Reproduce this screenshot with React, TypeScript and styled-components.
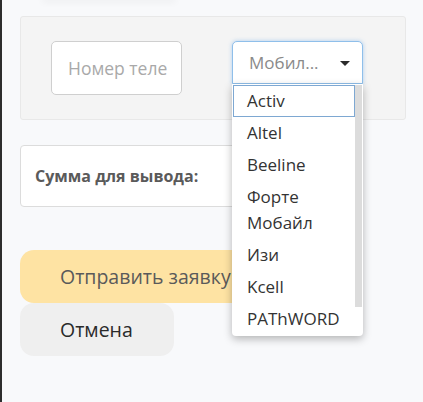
import React from "react";
import styled, { createGlobalStyle } from "styled-components";

const Global = createGlobalStyle`
  html, body { margin: 0; padding: 0; background: #f8f9fb; }
  body { font-family: "Open Sans", "Noto Sans", sans-serif; }
  * { box-sizing: border-box; }
`;

const Page = styled.div`
  min-height: 402px;
  border-left: 2px solid #2d2d2d;
  background: #f8f9fb;
  padding: 0 0 0 18px;
  overflow: hidden;
`;

const TopShade = styled.div`
  height: 0;
  width: 130px;
  margin-left: 24px;
  box-shadow: 0 0 7px 2px rgba(0, 0, 0, 0.06);
`;

const Panel = styled.div`
  margin-top: 16px;
  width: 386px;
  height: 104px;
  background: #f4f4f4;
  border: 1px solid #e8e8e8;
  border-radius: 3px;
  padding: 24px 0 0 30px;
  display: flex;
  align-items: flex-start;
  gap: 50px;
`;

const PhoneInput = styled.input`
  width: 131px;
  height: 54px;
  border: 1px solid #cfcfcf;
  border-radius: 5px;
  background: #fff;
  padding: 0 14px 0 16px;
  font-family: "Open Sans", sans-serif;
  font-size: 17.5px;
  color: #333;
  outline: none;
  &::placeholder { color: #a9a9a9; }
`;

const SelectWrap = styled.div`
  position: relative;
  width: 131px;
`;

const SelectBox = styled.div`
  height: 43px;
  border: 1px solid #8fbfea;
  border-radius: 5px 5px 0 0;
  background: #fff;
  box-shadow: 0 0 4px rgba(90, 160, 230, 0.45);
  display: flex;
  align-items: center;
  justify-content: space-between;
  padding: 0 12px 0 16px;
  font-size: 17px;
  color: #8a8a8a;
`;

const Caret = styled.span`
  width: 0;
  height: 0;
  border-left: 5px solid transparent;
  border-right: 5px solid transparent;
  border-top: 5px solid #2b2b2b;
  margin-top: 2px;
`;

const List = styled.div`
  position: absolute;
  top: 43px;
  left: 0;
  width: 131px;
  background: #fff;
  padding: 1px 8px 1px 1px;
  border-radius: 0 0 4px 4px;
  box-shadow: 0 3px 8px rgba(0, 0, 0, 0.28);
  z-index: 5;
`;

const Scroll = styled.div`
  position: absolute;
  right: 1px;
  top: 1px;
  width: 7px;
  height: 222px;
  background: #dcdcdc;
`;

const Item = styled.div<{ $active?: boolean }>`
  border: 1px solid ${(p) => (p.$active ? "#7ea8d2" : "transparent")};
  padding: 2px 13px;
  line-height: 26px;
  font-size: 17px;
  color: #333;
`;

const SumBox = styled.div`
  margin-top: 25px;
  width: 300px;
  height: 62px;
  background: #fff;
  border: 1px solid #dcdcdc;
  border-radius: 4px;
  display: flex;
  align-items: center;
  padding-left: 14px;
  font-weight: 700;
  font-size: 16px;
  color: #5a5a5a;
`;

const Button = styled.div<{ $variant: "primary" | "secondary"; $width: number }>`
  width: ${(p) => p.$width}px;
  height: 53px;
  border-radius: 14px;
  display: flex;
  align-items: center;
  padding-left: 40px;
  font-size: 19.5px;
  background: ${(p) => (p.$variant === "primary" ? "#fee3a3" : "#efefef")};
  color: ${(p) => (p.$variant === "primary" ? "#5a5a5a" : "#2a2a2a")};
`;

const Actions = styled.div`
  margin-top: 43px;
  display: flex;
  flex-direction: column;
`;

const items = ["Activ", "Altel", "Beeline", "Форте Мобайл", "Изи", "Kcell", "PAThWORD"];

export default function App() {
  return (
    <>
      <Global />
      <Page>
        <TopShade />
        <Panel>
          <PhoneInput placeholder="Номер телефона" />
          <SelectWrap>
            <SelectBox>
              <span>Мобил...</span>
              <Caret />
            </SelectBox>
            <List>
              {items.map((it, i) => (
                <Item key={it} $active={i === 0}>
                  {it}
                </Item>
              ))}
              <Scroll />
            </List>
          </SelectWrap>
        </Panel>
        <SumBox>Сумма для вывода:</SumBox>
        <Actions>
          <Button $variant="primary" $width={300}>
            Отправить заявку
          </Button>
          <Button $variant="secondary" $width={154}>
            Отмена
          </Button>
        </Actions>
      </Page>
    </>
  );
}
